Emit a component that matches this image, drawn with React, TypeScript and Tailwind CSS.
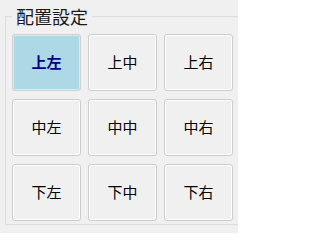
import { useState } from "react";

const cells = ["上左", "上中", "上右", "中左", "中中", "中右", "下左", "下中", "下右"];

export default function App() {
	const [selected, setSelected] = useState("上左");
	return (
		<div
			className="h-[233px] w-[238px] overflow-hidden bg-[#f0f0f0] pt-[5px] text-black"
			style={{ fontFamily: '"Noto Sans CJK JP", "Noto Sans", sans-serif' }}
		>
			<fieldset className="ml-[5px] w-[245px] border border-[#dcdcdc] px-[6px] pt-[7px] pb-[3px]">
				<legend className="px-1 text-[18px] leading-[22px] text-[#1a1a1a]">配置設定</legend>
				<div className="grid grid-cols-[69px_69px_69px] grid-rows-[57px_57px_57px] gap-x-[7px] gap-y-[8px]">
					{cells.map((c) => {
						const active = c === selected;
						return (
							<button
								key={c}
								type="button"
								onClick={() => setSelected(c)}
								className={
									active
										? "rounded-[3px] border border-[#d0d0d0] bg-[#add8e6] text-[15px] font-bold text-[#000080] shadow-[inset_0_0_0_1px_#ffffff80]"
										: "rounded-[3px] border border-[#cccccc] bg-[#f0f0f0] text-[15px] text-black shadow-[inset_0_0_0_1px_#ffffff]"
								}
							>
								{c}
							</button>
						);
					})}
				</div>
			</fieldset>
		</div>
	);
}
